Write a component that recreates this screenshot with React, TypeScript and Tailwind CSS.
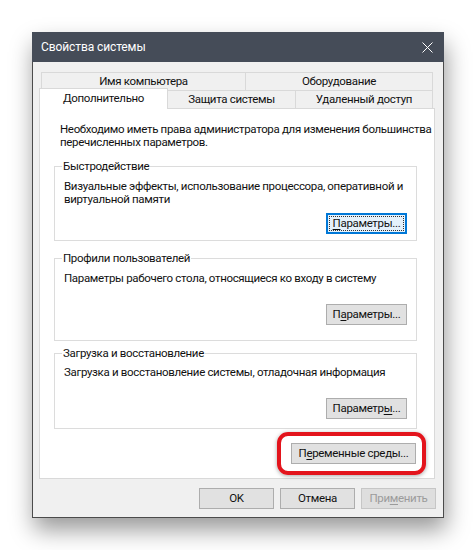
import type { ReactNode } from 'react'

function Btn({ children, w = 'w-[81px]', variant = 'normal' }: {
  children: ReactNode
  w?: string
  variant?: 'normal' | 'focused' | 'disabled'
}) {
  if (variant === 'focused') {
    return (
      <div className={`relative ${w} h-[21px] border-2 border-[#0078d7] bg-[#e5f1fb] flex items-center justify-center leading-none`}>
        <span className="absolute inset-[1px] border border-dotted border-[#333]" />
        {children}
      </div>
    )
  }
  if (variant === 'disabled') {
    return (
      <div className={`${w} h-[21px] border border-[#c6c6c6] bg-[#dedede] text-[#9b9b9b] flex items-center justify-center leading-none`}>
        {children}
      </div>
    )
  }
  return (
    <div className={`${w} h-[21px] border border-[#adadad] bg-[#e1e1e1] flex items-center justify-center leading-none`}>
      {children}
    </div>
  )
}

const U = ({ children }: { children: ReactNode }) => (
  <span className="underline underline-offset-[2px] decoration-1">{children}</span>
)

export default function App() {
  return (
    <div className="w-[476px] h-[550px] bg-white pl-[32px] pt-[32px] font-['Roboto',Arial,sans-serif] text-[11.5px] tracking-[-0.33px] text-[#111]">
      <div className="w-[412px] h-[486px] flex flex-col border-x border-b border-[#4b4b4b] bg-[#f0f0f0] shadow-[2px_12px_22px_rgba(0,0,0,0.4)]">
        {/* title bar */}
        <div className="h-[30px] -mx-px flex items-center justify-between bg-[#454c58] pl-[9px] pr-[11px] text-white text-[12px] tracking-[-0.1px]">
          <span>Свойства системы</span>
          <svg width="11" height="11" viewBox="0 0 11 11">
            <path d="M0.5 0.5L10.5 10.5M10.5 0.5L0.5 10.5" stroke="white" strokeWidth="1" fill="none" />
          </svg>
        </div>

        <div className="flex-1 flex flex-col pl-[6px] pr-[7px] pt-[10px] pb-[8px]">
          <div className="w-[396px]">
            {/* back tab row */}
            <div className="ml-[2px] w-[392px] h-[18px] flex">
              <div className="w-[205px] border border-b-0 border-[#d9d9d9] flex items-center justify-center">Имя компьютера</div>
              <div className="w-[188px] -ml-px border border-b-0 border-[#d9d9d9] flex items-center justify-center">Оборудование</div>
            </div>
            {/* front tab row */}
            <div className="h-[18px] flex items-end">
              <div className="relative z-10 w-[129px] h-[21px] -mb-px bg-white border border-b-0 border-[#d9d9d9] flex items-center justify-center">Дополнительно</div>
              <div className="w-[129px] h-[18px] -ml-px border border-b-0 border-[#d9d9d9] flex items-center justify-center">Защита системы</div>
              <div className="w-[138px] h-[18px] -ml-px border border-b-0 border-[#d9d9d9] flex items-center justify-center">Удаленный доступ</div>
            </div>

            {/* panel */}
            <div className="relative h-[371px] border border-[#d9d9d9] bg-white pl-[14px] pr-[17px] pt-[14px]">
              <p className="pl-[6px] leading-[13px] whitespace-nowrap">
                Необходимо иметь права администратора для изменения большинства<br />
                перечисленных параметров.
              </p>

              <div className="mt-[17px] h-[75px] border border-[#dcdcdc] px-[9px]">
                <div className="-mt-[8px] -ml-[2px] w-fit bg-white px-px leading-[15px]">Быстродействие</div>
                <p className="mt-[6px] leading-[13px] whitespace-nowrap">
                  Визуальные эффекты, использование процессора, оперативной и<br />
                  виртуальной памяти
                </p>
                <div className="mt-[7px] flex justify-end">
                  <Btn variant="focused"><span><U>П</U>араметры...</span></Btn>
                </div>
              </div>

              <div className="mt-[17px] h-[83px] border border-[#dcdcdc] px-[9px]">
                <div className="-mt-[8px] -ml-[2px] w-fit bg-white px-px leading-[15px]">Профили пользователей</div>
                <p className="mt-[6px] leading-[13px] whitespace-nowrap">
                  Параметры рабочего стола, относящиеся ко входу в систему
                </p>
                <div className="mt-[19px] flex justify-end">
                  <Btn><span>П<U>а</U>раметры...</span></Btn>
                </div>
              </div>

              <div className="mt-[12px] h-[76px] border border-[#dcdcdc] px-[9px]">
                <div className="-mt-[8px] -ml-[2px] w-fit bg-white px-px leading-[15px]">Загрузка и восстановление</div>
                <p className="mt-[5px] leading-[13px] whitespace-nowrap">
                  Загрузка и восстановление системы, отладочная информация
                </p>
                <div className="mt-[19px] flex justify-end">
                  <Btn><span>Параметр<U>ы</U>...</span></Btn>
                </div>
              </div>

              <div className="mt-[14px] mr-px flex justify-end">
                <Btn w="w-[125px]"><span>П<U>е</U>ременные среды...</span></Btn>
              </div>

              {/* highlight */}
              <div className="absolute left-[237px] top-[323px] w-[149px] h-[43px] rounded-[11px] border-4 border-[#e3141c] shadow-[0_1px_4px_rgba(0,0,0,0.35)]" />
            </div>
          </div>

          {/* dialog buttons */}
          <div className="mt-[9px] flex justify-end gap-[6px]">
            <Btn w="w-[75px]">OK</Btn>
            <Btn w="w-[75px]">Отмена</Btn>
            <Btn w="w-[75px]" variant="disabled"><span>При<U>м</U>енить</span></Btn>
          </div>
        </div>
      </div>
    </div>
  )
}
